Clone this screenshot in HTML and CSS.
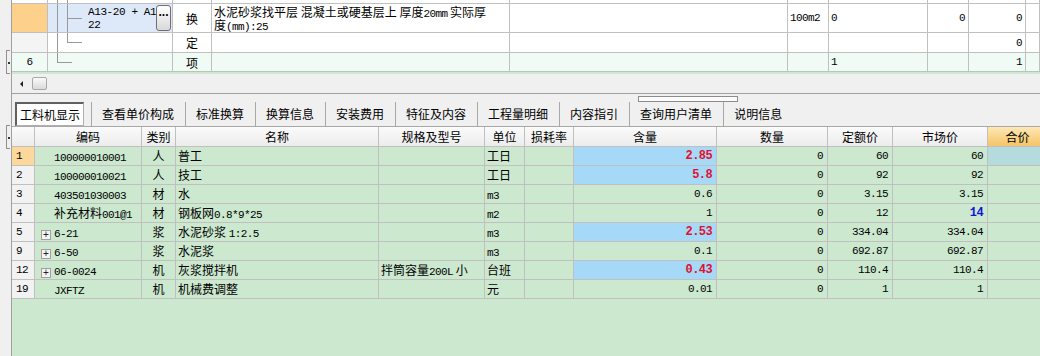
FILE: index.html
```html
<!DOCTYPE html>
<html lang="zh">
<head>
    <meta charset="UTF-8">
    <title>工料机显示</title>
    <link rel="stylesheet" href="styles.css">
</head>
<body>
    <div class="app">
        <div class="side">
            <span class="grip grip-top"></span>
            <span class="grip grip-bottom"></span>
        </div>
        <div class="main">
            <div class="top-grid">
                <div class="trow r0">
                    <div class="c c-num"></div>
                    <div class="c c-tree tree0"></div>
                    <div class="c c-flag"></div>
                    <div class="c c-desc"></div>
                    <div class="c c-5"></div>
                    <div class="c c-unit"></div>
                    <div class="c c-7"></div>
                    <div class="c c-8"></div>
                    <div class="c c-9"></div>
                    <div class="c c-10"></div>
                </div>
                <div class="trow r1">
                    <div class="c c-num num-active"></div>
                    <div class="c c-tree tree1">
                        <span class="code-text">A13-20 + A13<br>22</span>
                        <span class="more-btn">...</span>
                    </div>
                    <div class="c c-flag">换</div>
                    <div class="c c-desc desc-text">
                        <span class="line">水泥砂浆找平层 混凝土或硬基层上 厚度<span class="n">20mm</span> 实际厚</span>
                        <span class="line">度<span class="n">(mm):25</span></span>
                    </div>
                    <div class="c c-5"></div>
                    <div class="c c-unit n">100m2</div>
                    <div class="c c-7 n">0</div>
                    <div class="c c-8 n right">0</div>
                    <div class="c c-9 n right">0</div>
                    <div class="c c-10"></div>
                </div>
                <div class="trow r2">
                    <div class="c c-num num-plain"></div>
                    <div class="c c-tree tree2"></div>
                    <div class="c c-flag">定</div>
                    <div class="c c-desc"></div>
                    <div class="c c-5"></div>
                    <div class="c c-unit"></div>
                    <div class="c c-7"></div>
                    <div class="c c-8"></div>
                    <div class="c c-9 n right">0</div>
                    <div class="c c-10"></div>
                </div>
                <div class="trow r3">
                    <div class="c c-num n center">6</div>
                    <div class="c c-tree tree3"></div>
                    <div class="c c-flag">项</div>
                    <div class="c c-desc"></div>
                    <div class="c c-5"></div>
                    <div class="c c-unit"></div>
                    <div class="c c-7 n">1</div>
                    <div class="c c-8"></div>
                    <div class="c c-9 n right">1</div>
                    <div class="c c-10"></div>
                </div>
            </div>

            <div class="hscroll">
                <span class="arrow-left"></span>
                <span class="thumb"></span>
            </div>

            <div class="tabs">
                <span class="tab tab-active">工料机显示</span>
                <span class="tab">查看单价构成</span>
                <span class="tab">标准换算</span>
                <span class="tab">换算信息</span>
                <span class="tab">安装费用</span>
                <span class="tab">特征及内容</span>
                <span class="tab">工程量明细</span>
                <span class="tab">内容指引</span>
                <span class="tab">查询用户清单</span>
                <span class="tab">说明信息</span>
                <span class="tip-box"></span>
            </div>

            <div class="grid">
                <div class="grow ghead">
                    <div class="g g-num"></div>
                    <div class="g g-code">编码</div>
                    <div class="g g-kind">类别</div>
                    <div class="g g-name">名称</div>
                    <div class="g g-spec">规格及型号</div>
                    <div class="g g-unit">单位</div>
                    <div class="g g-loss">损耗率</div>
                    <div class="g g-qty">含量</div>
                    <div class="g g-amt">数量</div>
                    <div class="g g-price">定额价</div>
                    <div class="g g-market">市场价</div>
                    <div class="g g-total total-head">合价</div>
                </div>
                <!-- rows are filled by script.js -->
                <div id="rows"></div>
            </div>
        </div>
    </div>

    <script src="script.js"></script>
</body>
</html>
```

FILE: styles.css
```css
body {
    margin: 0;
    width: 1040px;
    height: 356px;
    overflow: hidden;
    background: #f0f0f0;
    font-family: "Noto Sans CJK SC", sans-serif;
    font-size: 12px;
    color: #000;
}
.app {
    display: flex;
    height: 356px;
}
.side {
    width: 12px;
    flex: none;
    box-sizing: border-box;
    border-right: 1px solid #a0a0a0;
    display: flex;
    flex-direction: column;
    align-items: flex-end;
}
.grip {
    width: 4px;
    height: 24px;
    margin-right: 1px;
    box-sizing: border-box;
    border: 1px solid #909090;
    border-right: none;
    background: radial-gradient(circle at 2px 12px, #333 0.8px, transparent 1.2px);
}
.grip-top {
    margin-top: 50px;
}
.grip-bottom {
    margin-top: 51px;
}
.main {
    flex: 1;
    min-width: 0;
    display: flex;
    flex-direction: column;
    overflow: hidden;
}

/* upper grid */
.top-grid {
    height: 74px;
    flex: none;
    background: #cce8cf;
    overflow: hidden;
}
.trow {
    display: flex;
    box-sizing: border-box;
    border-bottom: 1px solid #c0c0c0;
    background: #fff;
}
.r0 { height: 4px; }
.r1 { height: 29px; }
.r2 { height: 20px; }
.r3 { height: 19px; background: #effbf4; }
.c {
    flex: none;
    box-sizing: border-box;
    border-right: 1px solid #c0c0c0;
    display: flex;
    align-items: center;
    padding: 0 2px;
    overflow: hidden;
    white-space: nowrap;
}
.c-num { width: 36px; }
.c-tree { width: 125px; }
.c-flag { width: 39px; justify-content: center; }
.c-desc { width: 298px; }
.c-5 { width: 278px; }
.c-unit { width: 41px; }
.c-7 { width: 99px; }
.c-8 { width: 41px; }
.c-9 { width: 57px; }
.c-10 { flex: 1; }
.num-active { background: #fdd08b; }
.num-plain { background: #f4f4f4; }
.right { justify-content: flex-end; padding-right: 3px; }
.center { justify-content: center; text-align: center; }
.n {
    font-family: "Liberation Mono", monospace;
    font-size: 11px;
    letter-spacing: -0.6px;
}
.tree0 {
    background:
        linear-gradient(#999, #999) 9px 0 / 1px 100% no-repeat,
        linear-gradient(#999, #999) 19px 0 / 1px 100% no-repeat;
}
.tree1 {
    align-items: flex-start;
    padding: 0 1px 0 40px;
    background:
        linear-gradient(#999, #999) 9px 0 / 1px 100% no-repeat,
        linear-gradient(#999, #999) 19px 0 / 1px 100% no-repeat,
        linear-gradient(#999, #999) 19px 14px / 15px 1px no-repeat,
        #dde9f8;
}
.tree2 {
    background:
        linear-gradient(#999, #999) 9px 0 / 1px 100% no-repeat,
        linear-gradient(#999, #999) 19px 0 / 1px 10px no-repeat,
        linear-gradient(#999, #999) 19px 9px / 15px 1px no-repeat;
}
.tree3 {
    background:
        linear-gradient(#999, #999) 9px 0 / 1px 10px no-repeat,
        linear-gradient(#999, #999) 9px 9px / 15px 1px no-repeat;
}
.code-text {
    flex: 1;
    overflow: hidden;
    padding-top: 2px;
    font-family: "Liberation Mono", monospace;
    font-size: 11px;
    letter-spacing: -0.4px;
    line-height: 13px;
}
.more-btn {
    flex: none;
    width: 15px;
    height: 26px;
    margin-top: 1px;
    box-sizing: border-box;
    border: 1px solid #6f6f6f;
    border-radius: 3px;
    background: linear-gradient(#ffffff, #d8d8d8);
    font-family: "Liberation Sans", sans-serif;
    font-weight: bold;
    font-size: 12px;
    line-height: 12px;
    text-align: center;
    overflow: hidden;
}
.desc-text {
    flex-direction: column;
    align-items: flex-start;
    padding-top: 1px;
}
.desc-text .line {
    height: 13px;
    line-height: 13px;
}

/* horizontal scrollbar */
.hscroll {
    height: 20px;
    flex: none;
    box-sizing: border-box;
    border-bottom: 1px solid #a0a0a0;
    display: flex;
    align-items: center;
    padding-left: 8px;
}
.arrow-left {
    width: 0;
    height: 0;
    border-top: 3px solid transparent;
    border-bottom: 3px solid transparent;
    border-right: 3px solid #222;
    margin-right: 9px;
}
.thumb {
    width: 15px;
    height: 13px;
    box-sizing: border-box;
    border: 1px solid #a8a8a8;
    border-radius: 2px;
    background: linear-gradient(#fafafa, #dadada);
}

/* tabs */
.tabs {
    position: relative;
    height: 32px;
    flex: none;
    display: flex;
    align-items: flex-end;
    padding-left: 3px;
}
.tab {
    height: 24px;
    line-height: 23px;
    padding: 0 11px 0 10px;
    border-left: 1px solid #a8a8a8;
    white-space: nowrap;
}
.tab-active {
    width: 69px;
    box-sizing: border-box;
    padding: 0;
    margin-right: 7px;
    text-align: center;
    background: #fff;
    border: 1px solid #b0b0b0;
    border-top: 2px solid #606060;
    border-left: 2px solid #606060;
    line-height: 21px;
}
.tip-box {
    position: absolute;
    left: 626px;
    top: 2px;
    width: 100px;
    height: 6px;
    box-sizing: border-box;
    border: 1px solid #8c8c8c;
    background: #fbfbfb;
}

/* lower grid */
.grid {
    flex: 1;
    background: #cce8cf;
    border-top: 1px solid #a8a8a8;
}
.grow {
    display: flex;
    height: 19px;
    box-sizing: border-box;
    border-bottom: 1px solid #c0c0c0;
}
.ghead {
    height: 20px;
    background: linear-gradient(#fbfbfb, #ececec);
}
.g {
    flex: none;
    box-sizing: border-box;
    border-right: 1px solid #c0c0c0;
    padding: 0 2px;
    line-height: 18px;
    overflow: hidden;
    white-space: nowrap;
}
.g-num { width: 23px; background: #f2f2f2; padding-left: 4px; }
.g-code { width: 107px; padding-left: 6px; }
.g-kind { width: 34px; text-align: center; }
.g-name { width: 203px; }
.g-spec { width: 106px; }
.g-unit { width: 40px; }
.g-loss { width: 49px; }
.g-qty { width: 143px; text-align: right; padding-right: 4px; }
.g-amt { width: 111px; text-align: right; padding-right: 4px; }
.g-price { width: 65px; text-align: right; padding-right: 4px; }
.g-market { width: 95px; text-align: right; padding-right: 4px; }
.g-total { width: 60px; }
.ghead .g {
    text-align: center;
    padding: 0;
    line-height: 19px;
}
.ghead .g-num { background: transparent; }
.total-head {
    background: linear-gradient(#fde7b6, #f5c465);
}
.row-first .g-num { background: #fdd89c; }
.hl { background: #a6d9f7; }
.hl-total { background: #b4dcdc; }
.red {
    color: #e0102e;
    font-weight: bold;
    font-size: 12px;
}
.blue {
    color: #1414d8;
    font-weight: bold;
    font-size: 12px;
}
.exp {
    display: inline-block;
    vertical-align: -1px;
    width: 10px;
    height: 10px;
    box-sizing: border-box;
    margin-right: 3px;
    border: 1px solid #a0a0a0;
    background: #f4f4f4;
    font-family: "Liberation Sans", sans-serif;
    font-size: 10px;
    line-height: 8px;
    text-align: center;
    letter-spacing: 0;
    color: #222;
}
.exp-none {
    visibility: hidden;
}
```

FILE: script.js
```js
const rows = [
    ['1', '100000010001', '人', '普工', '', '工日', '', '2.85', '0', '60', '60', { hl: true, first: true }],
    ['2', '100000010021', '人', '技工', '', '工日', '', '5.8', '0', '92', '92', { hl: true }],
    ['3', '403501030003', '材', '水', '', 'm3', '', '0.6', '0', '3.15', '3.15', {}],
    ['4', '补充材料001@1', '材', '钢板网0.8*9*25', '', 'm2', '', '1', '0', '12', '14', { blueMarket: true }],
    ['5', '6-21', '浆', '水泥砂浆 1:2.5', '', 'm3', '', '2.53', '0', '334.04', '334.04', { hl: true, exp: true }],
    ['9', '6-50', '浆', '水泥浆', '', 'm3', '', '0.1', '0', '692.87', '692.87', { exp: true }],
    ['12', '06-0024', '机', '灰浆搅拌机', '拌筒容量200L 小', '台班', '', '0.43', '0', '110.4', '110.4', { hl: true, exp: true }],
    ['19', 'JXFTZ', '机', '机械费调整', '', '元', '', '0.01', '0', '1', '1', {}]
];

// half-width runs get the narrow monospace font, like the original grid
function mixed(text) {
    return text.replace(/[\x21-\x7e]+/g, m => `<span class="n">${m}</span>`);
}

const list = document.getElementById('rows');

rows.forEach(r => {
    const opt = r[11];
    const row = document.createElement('div');
    row.className = 'grow' + (opt.first ? ' row-first' : '');
    row.innerHTML = `
        <div class="g g-num n">${r[0]}</div>
        <div class="g g-code"><span class="exp ${opt.exp ? '' : 'exp-none'}">+</span>${mixed(r[1])}</div>
        <div class="g g-kind">${r[2]}</div>
        <div class="g g-name">${mixed(r[3])}</div>
        <div class="g g-spec">${mixed(r[4])}</div>
        <div class="g g-unit">${mixed(r[5])}</div>
        <div class="g g-loss">${r[6]}</div>
        <div class="g g-qty n ${opt.hl ? 'hl red' : ''}">${r[7]}</div>
        <div class="g g-amt n">${r[8]}</div>
        <div class="g g-price n">${r[9]}</div>
        <div class="g g-market n ${opt.blueMarket ? 'blue' : ''}">${r[10]}</div>
        <div class="g g-total ${opt.first ? 'hl-total' : ''}"></div>`;
    list.appendChild(row);
});
```
